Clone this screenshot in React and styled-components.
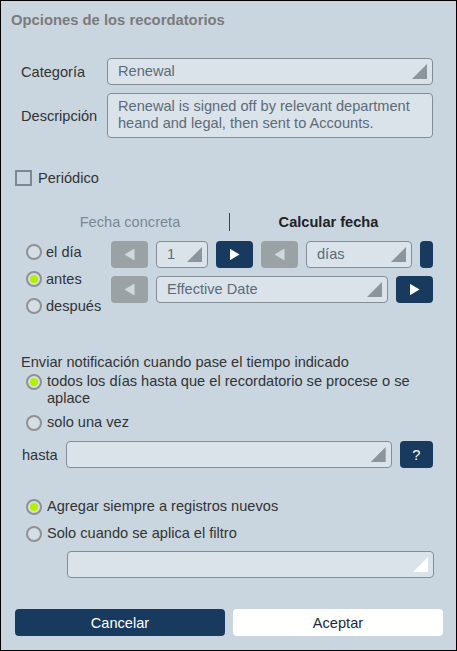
import React from "react";
import styled, { createGlobalStyle } from "styled-components";

const Global = createGlobalStyle`
  html, body { margin: 0; padding: 0; background: #c9d6e0; }
  * { box-sizing: border-box; }
  body { font-family: "Liberation Sans", Arial, sans-serif; font-size: 14.6px; color: #333; }
`;

const Page = styled.div`
  width: 457px;
  height: 651px;
  border: 1px solid #000;
  background: #c9d6e0;
  display: flex;
  flex-direction: column;
`;

const Title = styled.div`
  font-weight: bold;
  font-size: 14.8px;
  color: #7b7b7b;
  line-height: 16px;
  padding: 11px 0 0 10px;
`;

const FormGrid = styled.div`
  display: grid;
  grid-template-columns: 86px 326px;
  row-gap: 8px;
  margin: 30px 0 0 20px;
  align-items: center;
`;

const Label = styled.div`
  color: #333;
  line-height: 16px;
`;

const Select = styled.div`
  position: relative;
  height: 27px;
  width: ${(p) => p.$w || "100%"};
  flex: none;
  background: #dae3ea;
  border: 1px solid #838c94;
  border-radius: 4px;
  color: #5d6b78;
  line-height: 25px;
  padding-left: 10px;
  &::after {
    content: "";
    position: absolute;
    right: 5px;
    bottom: 5px;
    width: 15px;
    height: 15px;
    background: ${(p) => (p.$light ? "#ffffff" : "#8a959d")};
    clip-path: polygon(100% 0, 100% 100%, 0 100%);
  }
`;

const TextArea = styled.div`
  height: 45px;
  background: #dae3ea;
  border: 1px solid #838c94;
  border-radius: 4px;
  color: #5d6b78;
  line-height: 17px;
  padding: 4px 10px;
`;

const CheckRow = styled.label`
  display: flex;
  align-items: center;
  gap: 6px;
  margin: 32px 0 0 14px;
  line-height: 16px;
`;

const Check = styled.span`
  width: 17px;
  height: 16px;
  border: 2px solid #7b8893;
`;

const Tabs = styled.div`
  display: grid;
  grid-template-columns: 198px 198px;
  margin: 27px 0 0 30px;
`;

const Tab = styled.div`
  text-align: center;
  line-height: 18px;
  color: ${(p) => (p.$active ? "#222" : "#7a8895")};
  font-weight: ${(p) => (p.$active ? "bold" : "normal")};
  border-left: ${(p) => (p.$sep ? "1px solid #444" : "none")};
`;

const Calc = styled.div`
  display: flex;
  margin: 10px 0 0 25px;
`;

const RadioCol = styled.div`
  width: 85px;
  margin-top: -3px;
  display: flex;
  flex-direction: column;
`;

const CalcRadio = styled.div`
  height: 27px;
  display: flex;
  align-items: center;
  gap: 4px;
  color: #333;
`;

const Radio = styled.span`
  width: 16px;
  height: 16px;
  flex: none;
  border-radius: 50%;
  border: 2px solid #8f9193;
  background: #d5dee5;
  display: flex;
  align-items: center;
  justify-content: center;
  margin-top: ${(p) => p.$top || 0}px;
  &::after {
    content: "";
    width: 8px;
    height: 8px;
    border-radius: 50%;
    background: ${(p) => (p.$on ? "#b3f000" : "transparent")};
  }
`;

const Controls = styled.div`
  display: flex;
  flex-direction: column;
  gap: 8px;
`;

const CtrlRow = styled.div`
  display: flex;
  gap: 8px;
`;

const ArrowBtn = styled.div`
  width: ${(p) => p.$w || 37}px;
  height: 27px;
  flex: none;
  border-radius: 4px;
  background: ${(p) => (p.$dark ? "#173a5e" : "#9ba2a6")};
  display: flex;
  align-items: center;
  justify-content: center;
  &::after {
    content: "";
    display: ${(p) => (p.$empty ? "none" : "block")};
    width: 10px;
    height: 12px;
    background: ${(p) => (p.$dark ? "#ffffff" : "#d2d7da")};
    clip-path: ${(p) =>
      p.$dir === "left"
        ? "polygon(100% 0, 100% 100%, 0 50%)"
        : "polygon(0 0, 0 100%, 100% 50%)"};
  }
`;

const Notice = styled.div`
  margin: 35px 0 0 20px;
  line-height: 16px;
  color: #333;
`;

const RadioList = styled.div`
  display: flex;
  flex-direction: column;
  gap: ${(p) => p.$gap}px;
  margin: ${(p) => p.$mt}px 0 0 25px;
  width: 405px;
`;

const RadioItem = styled.div`
  display: flex;
  align-items: flex-start;
  gap: 5px;
  line-height: 17px;
  color: #333;
`;

const UntilRow = styled.div`
  display: flex;
  align-items: center;
  margin: 10px 0 0 21px;
  gap: 8px;
`;

const HelpBtn = styled.div`
  width: 33px;
  height: 27px;
  flex: none;
  border-radius: 4px;
  background: #173a5e;
  color: #fff;
  display: flex;
  align-items: center;
  justify-content: center;
`;

const FilterWrap = styled.div`
  margin: 9px 0 0 66px;
  width: 367px;
`;

const Footer = styled.div`
  display: flex;
  gap: 8px;
  margin: 31px 0 0 14px;
`;

const Button = styled.div`
  width: 210px;
  height: 27px;
  border-radius: 4px;
  background: ${(p) => (p.$primary ? "#173a5e" : "#ffffff")};
  color: ${(p) => (p.$primary ? "#ffffff" : "#1b2a3a")};
  display: flex;
  align-items: center;
  justify-content: center;
`;

export default function App() {
  return (
    <>
      <Global />
      <Page>
        <Title>Opciones de los recordatorios</Title>
        <FormGrid>
          <Label>Categoría</Label>
          <Select>Renewal</Select>
          <Label>Descripción</Label>
          <TextArea>
            Renewal is signed off by relevant department heand and legal, then sent to Accounts.
          </TextArea>
        </FormGrid>
        <CheckRow>
          <Check />
          Periódico
        </CheckRow>
        <Tabs>
          <Tab>Fecha concreta</Tab>
          <Tab $active $sep>Calcular fecha</Tab>
        </Tabs>
        <Calc>
          <RadioCol>
            <CalcRadio><Radio />el día</CalcRadio>
            <CalcRadio><Radio $on />antes</CalcRadio>
            <CalcRadio><Radio />después</CalcRadio>
          </RadioCol>
          <Controls>
            <CtrlRow>
              <ArrowBtn $dir="left" />
              <Select $w="52px">1</Select>
              <ArrowBtn $dark $dir="right" />
              <ArrowBtn $dir="left" />
              <Select $w="106px">días</Select>
              <ArrowBtn $dark $empty $w={13} />
            </CtrlRow>
            <CtrlRow>
              <ArrowBtn $dir="left" />
              <Select $w="232px">Effective Date</Select>
              <ArrowBtn $dark $dir="right" />
            </CtrlRow>
          </Controls>
        </Calc>
        <Notice>Enviar notificación cuando pase el tiempo indicado</Notice>
        <RadioList $gap={7} $mt={3}>
          <RadioItem>
            <Radio $on $top={1} />
            <span>todos los días hasta que el recordatorio se procese o se aplace</span>
          </RadioItem>
          <RadioItem>
            <Radio $top={1} />
            <span>solo una vez</span>
          </RadioItem>
        </RadioList>
        <UntilRow>
          <Label>hasta</Label>
          <Select $w="326px" />
          <HelpBtn>?</HelpBtn>
        </UntilRow>
        <RadioList $gap={10} $mt={30}>
          <RadioItem>
            <Radio $on $top={1} />
            <span>Agregar siempre a registros nuevos</span>
          </RadioItem>
          <RadioItem>
            <Radio $top={1} />
            <span>Solo cuando se aplica el filtro</span>
          </RadioItem>
        </RadioList>
        <FilterWrap>
          <Select $light />
        </FilterWrap>
        <Footer>
          <Button $primary>Cancelar</Button>
          <Button>Aceptar</Button>
        </Footer>
      </Page>
    </>
  );
}
